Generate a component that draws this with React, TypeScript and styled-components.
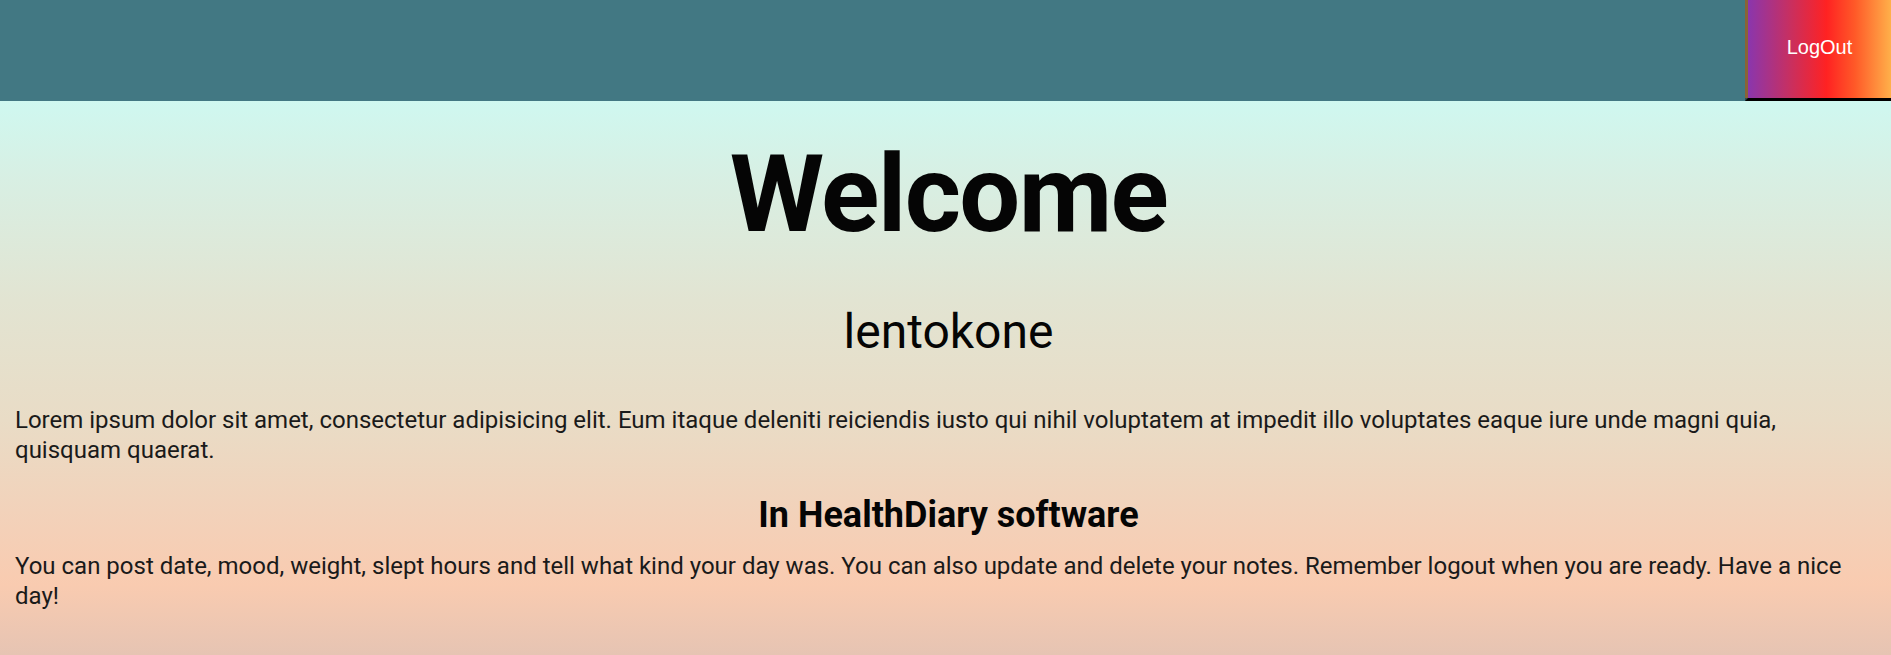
import React from "react";
import styled, { createGlobalStyle } from "styled-components";

const GlobalStyle = createGlobalStyle`
  html, body {
    margin: 0;
    padding: 0;
  }
  body {
    font-family: Roboto, "Noto Sans", sans-serif;
    color: #000;
  }
`;

const Page = styled.div`
  min-height: 655px;
  display: flex;
  flex-direction: column;
  background: linear-gradient(
    to bottom,
    #cff8f0 0px,
    #cff8f0 101px,
    #d8efe3 180px,
    #e2e4d2 300px,
    #e9dcc6 420px,
    #f3d1b9 520px,
    #f9cbb0 585px,
    #e6c4b3 655px
  );
`;

const Header = styled.header`
  height: 101px;
  background: #427883;
  display: flex;
  justify-content: flex-end;
  align-items: stretch;
`;

const LogOutButton = styled.button`
  width: 146px;
  box-sizing: border-box;
  border: none;
  border-left: 3px solid rgba(40, 40, 40, 0.55);
  border-bottom: 3px solid #000;
  margin: 0;
  padding: 0 0 4px;
  background: linear-gradient(to right, #8a36ad 0%, #c92f5f 30%, #ff2222 55%, #ff5a28 75%, #ffb04a 100%);
  color: #fff;
  font-family: "Liberation Sans", Arial, sans-serif;
  font-size: 20px;
  cursor: pointer;
`;

const Main = styled.main`
  display: flex;
  flex-direction: column;
  padding: 0 9px 0 15px;
`;

const Title = styled.h1`
  margin: 29px 0 0;
  font-size: 108px;
  line-height: 1.2;
  font-weight: 700;
  letter-spacing: -1.6px;
  text-align: center;
  color: #050505;
`;

const UserName = styled.h2`
  margin: 43px 0 0;
  font-size: 48px;
  line-height: 1.2;
  font-weight: 400;
  text-align: center;
  color: #050505;
`;

const Paragraph = styled.p<{ $gap: number }>`
  margin: ${(p) => p.$gap}px 0 0;
  font-size: 24px;
  line-height: 29.5px;
  color: #1a1a1a;
`;

const SubTitle = styled.h3`
  margin: 29px 0 0;
  font-size: 36px;
  line-height: 1.2;
  font-weight: 700;
  text-align: center;
  color: #050505;
`;

export default function App() {
  return (
    <>
      <GlobalStyle />
      <Page>
        <Header>
          <LogOutButton>LogOut</LogOutButton>
        </Header>
        <Main>
          <Title>Welcome</Title>
          <UserName>lentokone</UserName>
          <Paragraph $gap={46}>
            Lorem ipsum dolor sit amet, consectetur adipisicing elit. Eum itaque deleniti reiciendis iusto qui nihil
            voluptatem at impedit illo voluptates eaque iure unde magni quia, quisquam quaerat.
          </Paragraph>
          <SubTitle>In HealthDiary software</SubTitle>
          <Paragraph $gap={15}>
            You can post date, mood, weight, slept hours and tell what kind your day was. You can also update and
            delete your notes. Remember logout when you are ready. Have a nice day!
          </Paragraph>
        </Main>
      </Page>
    </>
  );
}
